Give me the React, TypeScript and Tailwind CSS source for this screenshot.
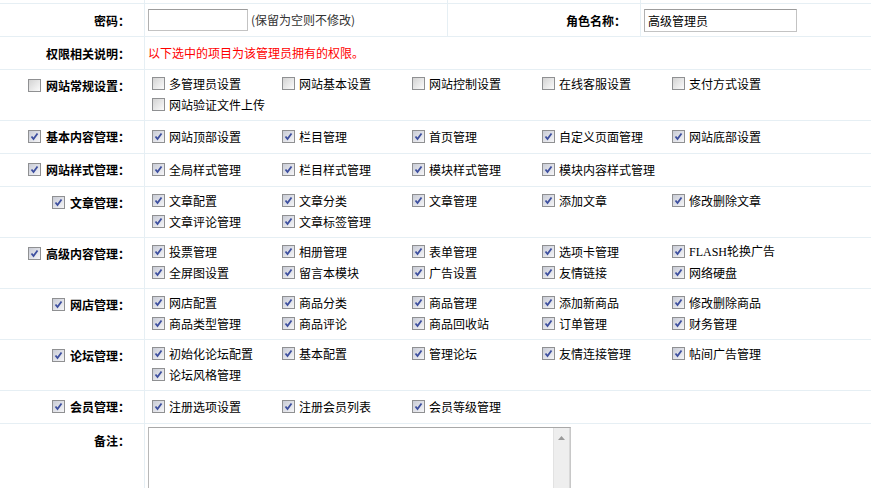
import React from 'react'

interface Group {
  label: string
  checked: boolean
  items: string[]
}

const groups: Group[] = [
  { label: '网站常规设置', checked: false, items: ['多管理员设置', '网站基本设置', '网站控制设置', '在线客服设置', '支付方式设置', '网站验证文件上传'] },
  { label: '基本内容管理', checked: true, items: ['网站顶部设置', '栏目管理', '首页管理', '自定义页面管理', '网站底部设置'] },
  { label: '网站样式管理', checked: true, items: ['全局样式管理', '栏目样式管理', '模块样式管理', '模块内容样式管理'] },
  { label: '文章管理', checked: true, items: ['文章配置', '文章分类', '文章管理', '添加文章', '修改删除文章', '文章评论管理', '文章标签管理'] },
  { label: '高级内容管理', checked: true, items: ['投票管理', '相册管理', '表单管理', '选项卡管理', 'FLASH轮换广告', '全屏图设置', '留言本模块', '广告设置', '友情链接', '网络硬盘'] },
  { label: '网店管理', checked: true, items: ['网店配置', '商品分类', '商品管理', '添加新商品', '修改删除商品', '商品类型管理', '商品评论', '商品回收站', '订单管理', '财务管理'] },
  { label: '论坛管理', checked: true, items: ['初始化论坛配置', '基本配置', '管理论坛', '友情连接管理', '帖间广告管理', '论坛风格管理'] },
  { label: '会员管理', checked: true, items: ['注册选项设置', '注册会员列表', '会员等级管理'] },
]

// old-style (XP) checkbox look
function Box({ checked }: { checked: boolean }) {
  return (
    <span
      className={`relative inline-block w-[13px] h-[13px] shrink-0 border border-[#8f9092] ${
        checked
          ? 'bg-linear-to-br from-[#c9ccd6] to-[#f5f5f7]'
          : 'bg-linear-to-br from-[#d3d3d3] to-[#fbfbfb]'
      }`}
    >
      {checked && (
        <svg viewBox="0 0 11 11" className="absolute left-0 top-0 w-[11px] h-[11px]">
          <path d="M2.5 5.5 L4.5 8 L8.5 2.5" fill="none" stroke="#3d4f9f" strokeWidth="1.8" />
        </svg>
      )}
    </span>
  )
}

function ItemLabel({ text }: { text: string }) {
  if (text.startsWith('FLASH')) {
    return (
      <span>
        <span className="font-['Liberation_Serif',serif]">FLASH</span>
        {text.slice(5)}
      </span>
    )
  }
  return <span>{text}</span>
}

export default function App() {
  return (
    <div className="w-[871px] h-[488px] overflow-hidden bg-white text-[12px] text-black font-['Noto_Sans_CJK_SC',sans-serif]">
      {/* tail of the row above */}
      <div className="flex h-[4px] border-b border-[#e6eff4]">
        <div className="w-[145px] border-r border-[#e6eff4]"></div>
        <div className="w-[303px] border-r border-[#e6eff4]"></div>
        <div className="w-[193px] border-r border-[#e6eff4]"></div>
        <div className="flex-1"></div>
      </div>

      {/* 密码 / 角色名称 */}
      <div className="flex border-b border-[#e6eff4]">
        <div className="w-[145px] shrink-0 border-r border-[#e6eff4] text-right pr-[14px] pt-[6px] pb-[5px] leading-[21px] font-bold">
          密码：
        </div>
        <div className="w-[303px] shrink-0 border-r border-[#e6eff4] pl-[3px] flex items-center">
          <input
            type="password"
            className="w-[100px] h-[22px] border border-[#c3c3c3] border-t-[#9c9c9c] border-l-[#b0b0b0] outline-none px-[3px]"
          />
          <span className="ml-[3px] text-[#333]">(保留为空则不修改)</span>
        </div>
        <div className="w-[193px] shrink-0 border-r border-[#e6eff4] text-right pr-[14px] pt-[6px] pb-[5px] leading-[21px] font-bold">
          角色名称：
        </div>
        <div className="flex-1 pl-[3px] flex items-center">
          <input
            type="text"
            defaultValue="高级管理员"
            className="w-[153px] h-[23px] border border-[#c3c3c3] border-t-[#9c9c9c] border-l-[#b0b0b0] outline-none px-[3px] text-[12px] font-['Noto_Sans_CJK_SC',sans-serif]"
          />
        </div>
      </div>

      {/* 权限相关说明 */}
      <div className="flex border-b border-[#e6eff4]">
        <div className="w-[145px] shrink-0 border-r border-[#e6eff4] text-right pr-[14px] pt-[6px] pb-[5px] leading-[21px] font-bold">
          权限相关说明：
        </div>
        <div className="flex-1 pl-[3px] flex items-center text-[#ff0000]">
          以下选中的项目为该管理员拥有的权限。
        </div>
      </div>

      {groups.map((g) => (
        <div key={g.label} className="flex border-b border-[#e6eff4]">
          <div className="w-[145px] shrink-0 border-r border-[#e6eff4] pr-[14px] pt-[5px] pb-[6px] leading-[21px] font-bold flex justify-end items-start">
            <span className="h-[21px] flex items-center mr-[5px]">
              <Box checked={g.checked} />
            </span>
            <span>{g.label}：</span>
          </div>
          <div className="flex-1 pl-[3px] pt-[3px] pb-[5px] flex items-center">
            <div className="flex flex-wrap">
              {g.items.map((it) => (
                <div key={it} className="w-[130px] h-[21px] flex items-center leading-[21px]">
                  <span className="ml-[4px] mr-[4px] flex">
                    <Box checked={g.checked} />
                  </span>
                  <ItemLabel text={it} />
                </div>
              ))}
            </div>
          </div>
        </div>
      ))}

      {/* 备注 */}
      <div className="flex">
        <div className="w-[145px] shrink-0 border-r border-[#e6eff4] text-right pr-[14px] pt-[6px] pb-[5px] leading-[21px] font-bold">
          备注：
        </div>
        <div className="flex-1 pl-[3px] pt-[3px] pb-[6px]">
          <div className="w-[423px] h-[110px] flex border border-[#c8c8c8] border-t-[#a8a8a8] border-l-[#b8b8b8]">
            <textarea className="flex-1 resize-none outline-none border-0 p-[2px]"></textarea>
            <div className="w-[17px] bg-[#eeeeee] border-l border-[#e2e2e2] border-r border-r-[#d8d8d8] flex justify-center pt-[8px]">
              <svg viewBox="0 0 7 4" className="w-[7px] h-[4px]">
                <path d="M3.5 0 L7 4 L0 4 Z" fill="#9a9a9a" />
              </svg>
            </div>
          </div>
        </div>
      </div>
    </div>
  )
}
